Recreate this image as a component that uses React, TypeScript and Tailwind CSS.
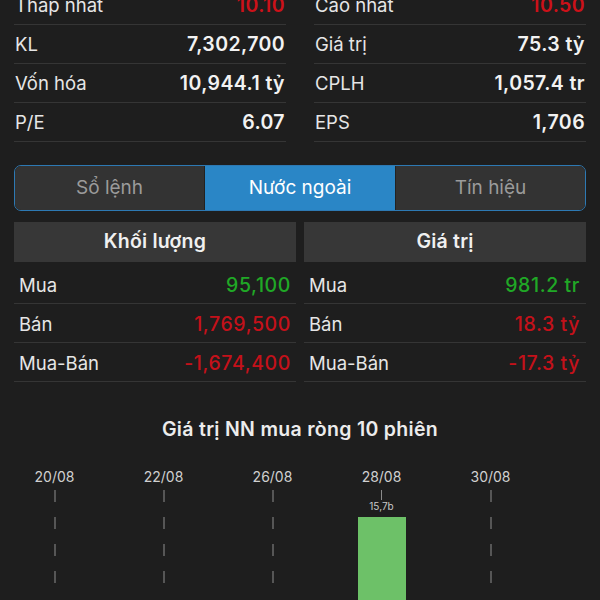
import React from "react";

interface IStatProps {
  label: string;
  value: string;
  color?: string;
}

const stats: [IStatProps, IStatProps][] = [
  [
    { label: "Thấp nhất", value: "10.10", color: "text-[#cc1119]" },
    { label: "Cao nhất", value: "10.50", color: "text-[#cc1119]" },
  ],
  [
    { label: "KL", value: "7,302,700" },
    { label: "Giá trị", value: "75.3 tỷ" },
  ],
  [
    { label: "Vốn hóa", value: "10,944.1 tỷ" },
    { label: "CPLH", value: "1,057.4 tr" },
  ],
  [
    { label: "P/E", value: "6.07" },
    { label: "EPS", value: "1,706" },
  ],
];

const green = "text-[#20a826]";
const red = "text-[#c4111a]";

const volume: IStatProps[] = [
  { label: "Mua", value: "95,100", color: green },
  { label: "Bán", value: "1,769,500", color: red },
  { label: "Mua-Bán", value: "-1,674,400", color: red },
];
const money: IStatProps[] = [
  { label: "Mua", value: "981.2 tr", color: green },
  { label: "Bán", value: "18.3 tỷ", color: red },
  { label: "Mua-Bán", value: "-17.3 tỷ", color: red },
];

const dates = ["20/08", "22/08", "26/08", "28/08", "30/08"];

const StatRow: React.FC<IStatProps> = ({ label, value, color }) => (
  <div className="flex h-[39px] items-center justify-between border-b border-[#353535] pt-[2px] pl-[1px] pr-[1px]">
    <span className="text-[18.5px] text-[#e6e6e6]">{label}</span>
    <span className={"text-[19.5px] font-semibold tracking-[0.4px] " + (color ?? "text-[#f2f2f2]")}>
      {value}
    </span>
  </div>
);

const Table: React.FC<{ title: string; rows: IStatProps[]; padRight: string }> = ({
  title,
  rows,
  padRight,
}) => (
  <div className="flex flex-col">
    <div className="flex h-[40px] items-center justify-center bg-[#373737] text-[19.5px] font-semibold tracking-[0.2px] text-[#f0f0f0]">
      {title}
    </div>
    <div className="mt-[3px] flex flex-col">
      {rows.map((r) => (
        <div
          key={r.label}
          className={"flex h-[39px] items-center justify-between border-b border-[#353535] pt-[3px] pl-[5px] " + padRight}
        >
          <span className="text-[18.5px] text-[#e6e6e6]">{r.label}</span>
          <span className={"text-[19.5px] font-medium tracking-[0.6px] " + r.color}>{r.value}</span>
        </div>
      ))}
    </div>
  </div>
);

const DashedLine = () => (
  <svg width="2" height="100" className="mt-[4px]">
    <line x1="1" y1="0" x2="1" y2="100" stroke="#6a6a6a" strokeWidth="1.5" strokeDasharray="12 15" />
  </svg>
);

export default function App() {
  const tabs = ["Sổ lệnh", "Nước ngoài", "Tín hiệu"];
  return (
    <div
      className="h-[600px] w-[600px] overflow-hidden bg-[#1e1e1e]"
      style={{ fontFamily: "Inter, 'Noto Sans', sans-serif" }}
    >
      <div className="-mt-[14px] grid grid-cols-2 gap-x-[28px] px-[14px]">
        {stats.map(([l, r]) => (
          <React.Fragment key={l.label}>
            <StatRow {...l} />
            <StatRow {...r} />
          </React.Fragment>
        ))}
      </div>

      <div className="mx-[14px] mt-[23px] grid h-[46px] grid-cols-3 overflow-hidden rounded-[7px] border-[1.5px] border-[#2d79b3]">
        {tabs.map((t, i) => (
          <div
            key={t}
            className={
              "flex items-center justify-center pt-[1px] text-[19px] " +
              (i === 1
                ? "bg-[#2a86c6] text-white"
                : "bg-[#333333] text-[#9b9b9b]") +
              (i === 0 ? " border-r border-[#222]" : "") +
              (i === 2 ? " border-l border-[#222]" : "")
            }
          >
            {t}
          </div>
        ))}
      </div>

      <div className="mx-[14px] mt-[11px] grid grid-cols-2 gap-x-[8px]">
        <Table title="Khối lượng" rows={volume} padRight="pr-[5px]" />
        <Table title="Giá trị" rows={money} padRight="pr-[6px]" />
      </div>

      <div className="mt-[34px] text-center text-[19.5px] font-semibold leading-[26px] tracking-[0.3px] text-[#ececec]">
        Giá trị NN mua ròng 10 phiên
      </div>

      <div className="mt-[26px] flex">
        {dates.map((d) => (
          <div key={d} className="flex w-[109px] flex-col items-center">
            <span className="text-[14px] leading-[18px] text-[#d0d0d0]">{d}</span>
            {d === "28/08" ? (
              <div className="flex flex-col items-center">
                <div className="mt-[4px] h-[10px] w-px bg-[#8a8a8a]" />
                <span className="text-[10px] leading-[12px] text-[#c8c8c8]">15,7b</span>
                <div className="mt-[5px] h-[90px] w-[48px] bg-[#6dc168]" />
              </div>
            ) : (
              <DashedLine />
            )}
          </div>
        ))}
      </div>
    </div>
  );
}
